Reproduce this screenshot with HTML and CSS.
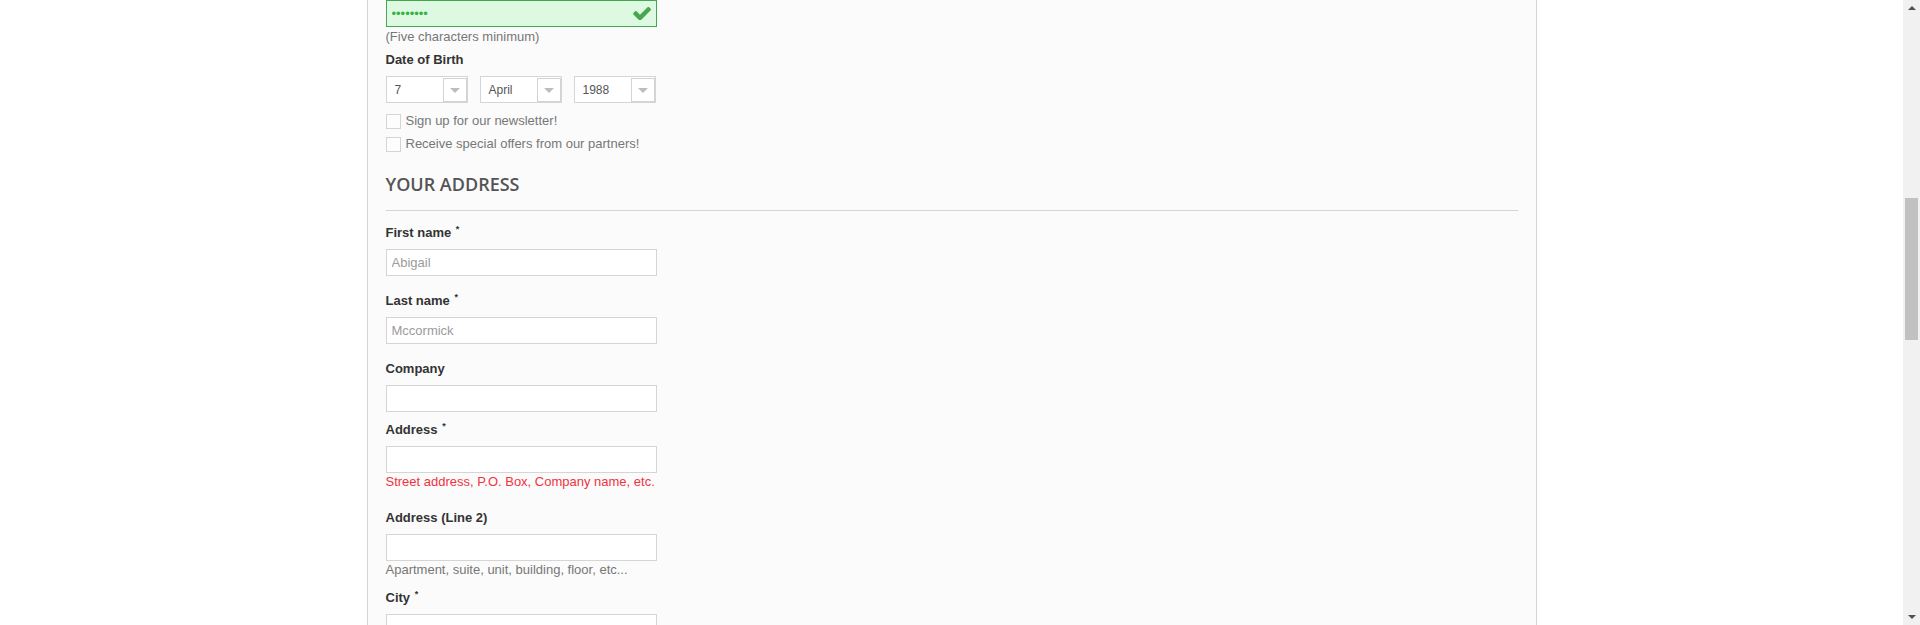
FILE: index.html
```html
<!DOCTYPE html>
<html lang="en">
<head>
<meta charset="utf-8">
<title>Create an account</title>
<link rel="stylesheet" href="styles.css">
</head>
<body>
<div class="page">
  <div class="container">
    <div class="box">
      <div class="field field-pw">
        <div class="input-wrap">
          <input class="form-control valid" type="password" value="12345678">
          <svg class="check" viewBox="109 362 1562 1096" width="18" height="13" aria-hidden="true"><path fill="#46a74e" d="M1671 566q0 40-28 68l-724 724-136 136q-28 28-68 28t-68-28l-136-136-362-362q-28-28-28-68t28-68l136-136q28-28 68-28t68 28l294 295 656-657q28-28 68-28t68 28l136 136q28 28 28 68z"/></svg>
        </div>
        <span class="comment">(Five characters minimum)</span>
      </div>

      <div class="field field-dob">
        <label class="label">Date of Birth</label>
        <div class="selects">
          <div class="select"><span class="select-text">7</span><span class="select-arrow"><svg viewBox="0 0 10 5" width="10" height="5"><polygon points="0,0 10,0 5,5" fill="#bdbdbd"/></svg></span></div>
          <div class="select"><span class="select-text">April</span><span class="select-arrow"><svg viewBox="0 0 10 5" width="10" height="5"><polygon points="0,0 10,0 5,5" fill="#bdbdbd"/></svg></span></div>
          <div class="select"><span class="select-text">1988</span><span class="select-arrow"><svg viewBox="0 0 10 5" width="10" height="5"><polygon points="0,0 10,0 5,5" fill="#bdbdbd"/></svg></span></div>
        </div>
      </div>

      <div class="checkbox first"><span class="checker"></span><span>Sign up for our newsletter!</span></div>
      <div class="checkbox"><span class="checker"></span><span>Receive special offers from our partners!</span></div>

      <h3 class="page-subheading">Your address</h3>

      <div class="field field-gap16 first-field">
        <label class="label">First name <sup>*</sup></label>
        <input class="form-control" type="text" value="Abigail">
      </div>
      <div class="field field-gap16">
        <label class="label">Last name <sup>*</sup></label>
        <input class="form-control" type="text" value="Mccormick">
      </div>
      <div class="field field-gap16">
        <label class="label">Company</label>
        <input class="form-control" type="text" value="">
      </div>
      <div class="field field-gap9">
        <label class="label">Address <sup>*</sup></label>
        <input class="form-control" type="text" value="">
        <span class="inline-infos">Street address, P.O. Box, Company name, etc.</span>
      </div>
      <div class="field field-gap18">
        <label class="label">Address (Line 2)</label>
        <input class="form-control" type="text" value="">
        <span class="comment">Apartment, suite, unit, building, floor, etc...</span>
      </div>
      <div class="field field-gap10">
        <label class="label">City <sup>*</sup></label>
        <input class="form-control" type="text" value="">
      </div>
    </div>
  </div>
</div>

<div class="scrollbar">
  <span class="sb-arrow sb-up"></span>
  <span class="sb-thumb"></span>
  <span class="sb-arrow sb-down"></span>
</div>
</body>
</html>
```

FILE: styles.css
```css
html, body {
  margin: 0;
  padding: 0;
  background: #ffffff;
  height: 625px;
  overflow: hidden;
}

body {
  font-family: "Liberation Sans", Arial, sans-serif;
  font-size: 13px;
  line-height: 18px;
  color: #777777;
}

.page {
  padding-right: 17px;
}

.container {
  width: 1170px;
  margin: 0 auto;
}

.box {
  background: #fbfbfb;
  border: 1px solid #d6d4d4;
  border-top: none;
  padding: 0 18px 40px;
  min-height: 700px;
}

.field {
  display: flex;
  flex-direction: column;
  align-items: flex-start;
}

.label {
  display: block;
  font-weight: bold;
  color: #333333;
  line-height: 18px;
  margin-bottom: 7px;
}

.label sup {
  font-size: 9px;
  line-height: 0;
  vertical-align: 5px;
  margin-left: 1px;
  color: #333333;
}

.form-control {
  box-sizing: border-box;
  width: 271px;
  height: 27px;
  padding: 3px 5px;
  margin: 0;
  border: 1px solid #d6d4d4;
  background: #ffffff;
  font-family: "Liberation Sans", Arial, sans-serif;
  font-size: 13px;
  color: #9c9b9b;
  outline: none;
}

.input-wrap {
  position: relative;
  width: 271px;
}

.form-control.valid {
  background: #ddf9e1;
  border-color: #46a74e;
  color: #35b33f;
  letter-spacing: 0;
}

.check {
  position: absolute;
  top: 7px;
  right: 6px;
}

.comment {
  display: block;
  color: #777777;
}

.field-pw .comment {
  margin-top: 1px;
}

.field-dob {
  margin-top: 5px;
}

.field-dob .label {
  margin-bottom: 7px;
}

.selects {
  display: flex;
  gap: 12px;
}

.select {
  position: relative;
  box-sizing: border-box;
  width: 82px;
  height: 27px;
  border: 1px solid #d6d4d4;
  background: #ffffff;
  display: flex;
  align-items: center;
  padding-left: 8px;
}

.select-text {
  font-size: 12px;
  color: #555555;
}

.select-arrow {
  position: absolute;
  top: 1px;
  right: 0;
  bottom: 0;
  box-sizing: border-box;
  width: 24px;
  border: 1px solid #d3d3d3;
  background: #ffffff;
  display: flex;
  align-items: center;
  justify-content: center;
}

.checkbox {
  display: flex;
  align-items: center;
  gap: 5px;
  margin-top: 5px;
  height: 18px;
  color: #777777;
}

.checkbox.first {
  margin-top: 9px;
}

.checker {
  box-sizing: border-box;
  width: 15px;
  height: 15px;
  border: 1px solid #d6d4d4;
  background: #fdfdfd;
  margin-top: 1px;
}

.page-subheading {
  margin: 20px 0 13px;
  padding: 0 0 15px;
  border-bottom: 1px solid #d6d4d4;
  font-family: "Open Sans", sans-serif;
  font-weight: 600;
  font-size: 18px;
  line-height: 22px;
  text-transform: uppercase;
  color: #555454;
}

.field-gap16 { margin-top: 16px; }
.field-gap16.first-field { margin-top: 0; }
.field-gap9 { margin-top: 9px; }
.field-gap18 { margin-top: 18px; }
.field-gap10 { margin-top: 10px; }

.inline-infos {
  display: block;
  color: #f13340;
}

.scrollbar {
  position: fixed;
  top: 0;
  right: 0;
  width: 17px;
  height: 625px;
  background: #f1f1f1;
}

.sb-thumb {
  position: absolute;
  left: 2px;
  top: 198px;
  width: 13px;
  height: 142px;
  background: #c1c1c1;
}

.sb-arrow {
  position: absolute;
  left: 5px;
  width: 0;
  height: 0;
  border-left: 4px solid transparent;
  border-right: 4px solid transparent;
}

.sb-up {
  top: 6px;
  border-bottom: 4px solid #505050;
}

.sb-down {
  bottom: 6px;
  border-top: 4px solid #505050;
}
```
